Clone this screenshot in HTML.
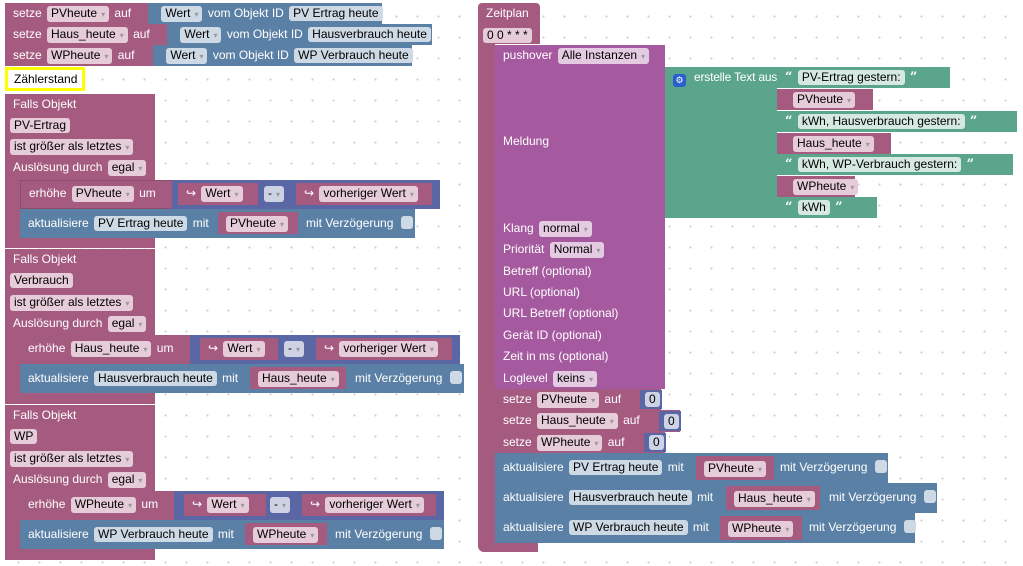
<!DOCTYPE html><html><head><meta charset="utf-8"><style>
body{margin:0;width:1023px;height:566px;overflow:hidden;background:#fff;background-image:radial-gradient(circle,#ccc 0.8px,transparent 1.2px);background-size:21px 21px;background-position:8px 6px;font-family:"Liberation Sans",Arial,sans-serif;font-size:12px;color:#fff;position:relative}
.r{position:absolute;box-sizing:border-box;white-space:nowrap;line-height:21px;padding-left:8px}
.m{background:#a55b80}.b{background:#5b80a5}.p{background:#a5599e}.g{background:#5ba58c}.d{background:#5b67a5}
.f{display:inline-block;line-height:15px;padding:0 4px;border-radius:3px;color:#000;background:rgba(255,255,255,.7);margin:0 2px;vertical-align:0px}
.m .f{background:#e6cbd8}.b .f{background:#cdd9e5}.g .f{background:#d5e9e1}.p .f{background:#e4cbe2}.d .f{background:#cdd2e5}
.f i{font-style:normal;font-size:8px;color:#999;margin-left:4px}
.chk{display:inline-block;width:12px;height:13px;border-radius:3px;background:#cdd9e5;vertical-align:-2px;margin-left:4px}
.q{font-weight:bold;font-family:"DejaVu Serif",serif;font-size:13px}
</style></head><body>
<!-- top setze rows -->
<div class="r m" style="left:5px;top:3px;width:145px;height:21px">setze <span class="f">PVheute<i>▾</i></span> auf</div>
<div class="r b" style="left:148px;top:3px;width:234px;height:21px">&nbsp;<span class="f">Wert<i>▾</i></span> vom Objekt ID <span class="f">PV Ertrag heute</span></div>
<div class="r m" style="left:5px;top:24px;width:164px;height:21px">setze <span class="f">Haus_heute<i>▾</i></span> auf</div>
<div class="r b" style="left:167px;top:24px;width:265px;height:21px">&nbsp;<span class="f">Wert<i>▾</i></span> vom Objekt ID <span class="f">Hausverbrauch heute</span></div>
<div class="r m" style="left:5px;top:45px;width:150px;height:21px">setze <span class="f">WPheute<i>▾</i></span> auf</div>
<div class="r b" style="left:153px;top:45px;width:259px;height:21px">&nbsp;<span class="f">Wert<i>▾</i></span> vom Objekt ID <span class="f">WP Verbrauch heute</span></div>
<div class="r" style="left:5px;top:67px;width:80px;height:24px;border:3px solid #ff0;background:#fff;color:#000;line-height:18px;padding-left:6px">Zählerstand</div>

<!-- Block 1 -->
<div class="r m" style="left:5px;top:94px;width:150px;height:154px;padding:0"></div>
<div class="r" style="left:5px;top:94px;line-height:20px">Falls Objekt</div>
<div class="r" style="left:5px;top:115px;padding-left:3px"><span class="f" style="background:#e6cbd8">PV-Ertrag</span></div>
<div class="r" style="left:5px;top:136px;padding-left:3px"><span class="f" style="background:#e6cbd8">ist größer als letztes<i>▾</i></span></div>
<div class="r" style="left:5px;top:157px">Auslösung durch <span class="f" style="background:#e6cbd8">egal<i>▾</i></span></div>
<div class="r m" style="left:20px;top:180px;width:154px;height:29px;line-height:25px;border:1px solid #8c4d6d">erhöhe <span class="f">PVheute<i>▾</i></span> um</div>
<div class="r d" style="left:172px;top:180px;width:268px;height:29px;line-height:25px;padding-left:3px"></div>
<div class="r m" style="left:178px;top:183px;width:80px;height:22px">↪ <span class="f">Wert<i>▾</i></span></div>
<div class="r d" style="left:262px;top:183px;width:32px;height:22px;padding-left:0"><span class="f">-<i>▾</i></span></div>
<div class="r m" style="left:296px;top:183px;width:136px;height:22px">↪ <span class="f">vorheriger Wert<i>▾</i></span></div>
<div class="r b" style="left:20px;top:209px;width:395px;height:29px;line-height:28px">aktualisiere <span class="f">PV Ertrag heute</span> mit</div>
<div class="r m" style="left:218px;top:212px;width:80px;height:22px;line-height:22px;padding-left:6px"><span class="f">PVheute<i>▾</i></span></div>
<div class="r" style="left:298px;top:209px;line-height:28px">mit Verzögerung <span class="chk"></span></div>

<!-- Block 2 -->
<div class="r m" style="left:5px;top:249px;width:150px;height:155px;padding:0"></div>
<div class="r" style="left:5px;top:249px;line-height:20px">Falls Objekt</div>
<div class="r" style="left:5px;top:270px;padding-left:3px"><span class="f" style="background:#e6cbd8">Verbrauch</span></div>
<div class="r" style="left:5px;top:292px;padding-left:3px"><span class="f" style="background:#e6cbd8">ist größer als letztes<i>▾</i></span></div>
<div class="r" style="left:5px;top:313px">Auslösung durch <span class="f" style="background:#e6cbd8">egal<i>▾</i></span></div>
<div class="r m" style="left:20px;top:335px;width:172px;height:29px;line-height:26px">erhöhe <span class="f">Haus_heute<i>▾</i></span> um</div>
<div class="r d" style="left:190px;top:335px;width:270px;height:29px"></div>
<div class="r m" style="left:200px;top:338px;width:78px;height:22px">↪ <span class="f">Wert<i>▾</i></span></div>
<div class="r d" style="left:282px;top:338px;width:34px;height:22px;padding-left:0"><span class="f">-<i>▾</i></span></div>
<div class="r m" style="left:316px;top:338px;width:136px;height:22px">↪ <span class="f">vorheriger Wert<i>▾</i></span></div>
<div class="r b" style="left:20px;top:364px;width:444px;height:29px;line-height:28px">aktualisiere <span class="f">Hausverbrauch heute</span> mit</div>
<div class="r m" style="left:250px;top:367px;width:96px;height:22px;line-height:22px;padding-left:6px"><span class="f">Haus_heute<i>▾</i></span></div>
<div class="r" style="left:347px;top:364px;line-height:28px">mit Verzögerung <span class="chk"></span></div>

<!-- Block 3 -->
<div class="r m" style="left:5px;top:405px;width:150px;height:155px;padding:0"></div>
<div class="r" style="left:5px;top:405px;line-height:20px">Falls Objekt</div>
<div class="r" style="left:5px;top:426px;padding-left:3px"><span class="f" style="background:#e6cbd8">WP</span></div>
<div class="r" style="left:5px;top:448px;padding-left:3px"><span class="f" style="background:#e6cbd8">ist größer als letztes<i>▾</i></span></div>
<div class="r" style="left:5px;top:469px">Auslösung durch <span class="f" style="background:#e6cbd8">egal<i>▾</i></span></div>
<div class="r m" style="left:20px;top:491px;width:156px;height:29px;line-height:26px">erhöhe <span class="f">WPheute<i>▾</i></span> um</div>
<div class="r d" style="left:174px;top:491px;width:270px;height:29px"></div>
<div class="r m" style="left:184px;top:494px;width:82px;height:22px">↪ <span class="f">Wert<i>▾</i></span></div>
<div class="r d" style="left:268px;top:494px;width:34px;height:22px;padding-left:0"><span class="f">-<i>▾</i></span></div>
<div class="r m" style="left:302px;top:494px;width:134px;height:22px">↪ <span class="f">vorheriger Wert<i>▾</i></span></div>
<div class="r b" style="left:20px;top:520px;width:424px;height:29px;line-height:28px">aktualisiere <span class="f">WP Verbrauch heute</span> mit</div>
<div class="r m" style="left:245px;top:523px;width:82px;height:22px;line-height:22px;padding-left:6px"><span class="f">WPheute<i>▾</i></span></div>
<div class="r" style="left:327px;top:520px;line-height:28px">mit Verzögerung <span class="chk"></span></div>

<!-- Zeitplan -->
<div class="r m" style="left:478px;top:3px;width:62px;height:41px;border-radius:4px 4px 0 0">Zeitplan</div>
<div class="r" style="left:478px;top:25px;padding-left:3px"><span class="f" style="background:#e6cbd8">0 0 * * *</span></div>
<div class="r m" style="left:478px;top:44px;width:17px;height:500px;padding:0"></div>
<div class="r m" style="left:478px;top:540px;width:60px;height:12px;padding:0;border-radius:0 0 0 6px"></div>

<div class="r p" style="left:495px;top:45px;width:170px;height:344px;padding:0"></div>
<div class="r" style="left:495px;top:45px">pushover <span class="f" style="background:#e4cbe2">Alle Instanzen<i>▾</i></span></div>
<div class="r" style="left:495px;top:131px">Meldung</div>
<div class="r" style="left:495px;top:218px">Klang <span class="f" style="background:#e4cbe2">normal<i>▾</i></span></div>
<div class="r" style="left:495px;top:239px">Priorität <span class="f" style="background:#e4cbe2">Normal<i>▾</i></span></div>
<div class="r" style="left:495px;top:261px">Betreff (optional)</div>
<div class="r" style="left:495px;top:282px">URL (optional)</div>
<div class="r" style="left:495px;top:303px">URL Betreff (optional)</div>
<div class="r" style="left:495px;top:325px">Gerät ID (optional)</div>
<div class="r" style="left:495px;top:346px">Zeit in ms (optional)</div>
<div class="r" style="left:495px;top:368px">Loglevel <span class="f" style="background:#e4cbe2">keins<i>▾</i></span></div>

<div class="r g" style="left:665px;top:67px;width:112px;height:151px;padding-left:8px"></div>
<div class="r" style="left:665px;top:67px;padding-left:8px"><span style="display:inline-block;width:13px;height:13px;background:#2a5fd0;border-radius:3px;vertical-align:-2px;text-align:center;line-height:13px;font-size:9px">⚙</span><span style="margin-left:8px;letter-spacing:-0.2px">erstelle Text aus</span></div>
<div class="r g" style="left:777px;top:67px;width:173px;height:21px"><span class="q">“</span> <span class="f">PV-Ertrag gestern:</span> <span class="q">”</span></div>
<div class="r m" style="left:777px;top:89px;width:96px;height:21px;padding-left:14px"><span class="f">PVheute<i>▾</i></span></div>
<div class="r g" style="left:777px;top:111px;width:240px;height:21px"><span class="q">“</span> <span class="f">kWh, Hausverbrauch gestern:</span> <span class="q">”</span></div>
<div class="r m" style="left:777px;top:133px;width:114px;height:21px;padding-left:14px"><span class="f">Haus_heute<i>▾</i></span></div>
<div class="r g" style="left:777px;top:154px;width:236px;height:21px"><span class="q">“</span> <span class="f">kWh, WP-Verbrauch gestern:</span> <span class="q">”</span></div>
<div class="r m" style="left:777px;top:176px;width:78px;height:21px;padding-left:14px"><span class="f">WPheute<i>▾</i></span></div>
<div class="r g" style="left:777px;top:197px;width:100px;height:21px"><span class="q">“</span> <span class="f">kWh</span> <span class="q">”</span></div>

<div class="r m" style="left:495px;top:389px;width:166px;height:21px">setze <span class="f">PVheute<i>▾</i></span> auf</div>
<div class="r d" style="left:640px;top:390px;width:22px;height:19px;padding-left:3px;line-height:19px"><span class="f">0</span></div>
<div class="r m" style="left:495px;top:410px;width:185px;height:22px">setze <span class="f">Haus_heute<i>▾</i></span> auf</div>
<div class="r d" style="left:659px;top:411px;width:22px;height:20px;padding-left:3px;line-height:20px"><span class="f">0</span></div>
<div class="r m" style="left:495px;top:432px;width:170px;height:21px">setze <span class="f">WPheute<i>▾</i></span> auf</div>
<div class="r d" style="left:644px;top:433px;width:22px;height:19px;padding-left:3px;line-height:19px"><span class="f">0</span></div>

<div class="r b" style="left:495px;top:453px;width:393px;height:30px;line-height:29px">aktualisiere <span class="f">PV Ertrag heute</span> mit</div>
<div class="r m" style="left:696px;top:456px;width:78px;height:24px;line-height:24px;padding-left:6px"><span class="f">PVheute<i>▾</i></span></div>
<div class="r" style="left:772px;top:453px;line-height:29px">mit Verzögerung <span class="chk"></span></div>
<div class="r b" style="left:495px;top:483px;width:442px;height:30px;line-height:29px">aktualisiere <span class="f">Hausverbrauch heute</span> mit</div>
<div class="r m" style="left:726px;top:486px;width:94px;height:24px;line-height:24px;padding-left:6px"><span class="f">Haus_heute<i>▾</i></span></div>
<div class="r" style="left:821px;top:483px;line-height:29px">mit Verzögerung <span class="chk"></span></div>
<div class="r b" style="left:495px;top:513px;width:420px;height:30px;line-height:29px">aktualisiere <span class="f">WP Verbrauch heute</span> mit</div>
<div class="r m" style="left:720px;top:516px;width:82px;height:24px;line-height:24px;padding-left:6px"><span class="f">WPheute<i>▾</i></span></div>
<div class="r" style="left:801px;top:513px;line-height:29px">mit Verzögerung <span class="chk"></span></div>
</body></html>
